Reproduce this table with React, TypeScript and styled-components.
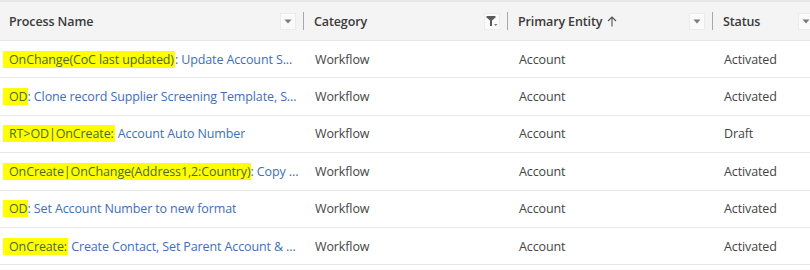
import React from "react";
import styled, { createGlobalStyle } from "styled-components";

const GlobalStyle = createGlobalStyle`
  html, body { margin: 0; padding: 0; background: #ffffff; }
  body { font-family: "Open Sans", "Noto Sans", sans-serif; }
`;

const Grid = styled.div`
  width: 810px;
  display: grid;
  grid-template-columns: 305px 204px 205px 96px;
  font-size: 12.5px;
  letter-spacing: -0.12px;
  color: #3b3a39;
`;

const HeaderCell = styled.div<{ $last?: boolean }>`
  height: 41px;
  background: #f4f4f4;
  border-top: 2px solid #e6e6e6;
  border-bottom: 1px solid #e6e6e6;
  display: flex;
  align-items: center;
  padding-left: 9px;
  padding-right: 0;
  gap: 7px;
  font-weight: 600;
  color: #3b3a39;
  box-sizing: border-box;
  overflow: hidden;
`;

const HeaderLabel = styled.span`
  flex: 1;
  white-space: nowrap;
  display: flex;
  align-items: center;
  gap: 5px;
`;

const IconBox = styled.span<{ $edge?: boolean }>`
  width: 16px;
  height: 17px;
  background: #fafafa;
  border: 1px solid #ececec;
  box-sizing: border-box;
  display: flex;
  align-items: center;
  justify-content: center;
  flex: none;
  margin-right: ${(p) => (p.$edge ? "-4px" : "0")};
`;

const Separator = styled.span`
  width: 1px;
  height: 18px;
  background: #a8a8a8;
  flex: none;
  margin-right: 1px;
`;

const Cell = styled.div`
  height: 37.4px;
  border-bottom: 1px solid #e8e8e8;
  box-sizing: border-box;
  display: flex;
  align-items: center;
  padding-left: 10px;
  padding-right: 6px;
  white-space: nowrap;
  overflow: hidden;
  color: #444444;
`;

const NameCell = styled(Cell)`
  padding-left: 3px;
`;

const NameText = styled.span`
  overflow: hidden;
  text-overflow: ellipsis;
  white-space: nowrap;
  color: #3d6fb8;
`;

const Mark = styled.span<{ $py: number; $px: number }>`
  background: #ffff00;
  color: #4b6a2a;
  padding: ${(p) => `${p.$py}px ${p.$px}px ${p.$py}px 6px`};
`;

const Caret = () => (
  <svg width="8" height="5" viewBox="0 0 8 5">
    <path d="M0.5 0.5 L7.5 0.5 L4 4.5 Z" fill="#7a7a7a" />
  </svg>
);

const FilterIcon = () => (
  <svg width="12" height="12" viewBox="0 0 12 12">
    <path d="M0.5 1 L9.5 1 L9.5 2.5 L6 5.5 L6 11 L4 11 L4 5.5 L0.5 2.5 Z" fill="#5a5a5a" />
    <path d="M8 9 L11.5 9 L9.75 11 Z" fill="#7a7a7a" />
  </svg>
);

const SortUp = () => (
  <svg width="10" height="11" viewBox="0 0 10 11">
    <path d="M5 10.5 L5 1 M1 5 L5 1 L9 5" stroke="#555" strokeWidth="1.1" fill="none" />
  </svg>
);

type Row = { mark: string; rest: string; py: number; px: number; status: string };

const rows: Row[] = [
  { mark: "OnChange(CoC last updated)", rest: ": Update Account S...", py: 6, px: 1, status: "Activated" },
  { mark: "OD", rest: ": Clone record Supplier Screening Template, S...", py: 3, px: 0, status: "Activated" },
  { mark: "RT>OD|OnCreate:", rest: " Account Auto Number", py: 4, px: 1, status: "Draft" },
  { mark: "OnCreate|OnChange(Address1,2:Country)", rest: ": Copy ...", py: 4, px: 0, status: "Activated" },
  { mark: "OD", rest: ": Set Account Number to new format", py: 3, px: 0, status: "Activated" },
  { mark: "OnCreate:", rest: " Create Contact, Set Parent Account & ...", py: 3, px: 1, status: "Activated" },
];

export default function App() {
  return (
    <>
      <GlobalStyle />
      <Grid>
        <HeaderCell>
          <HeaderLabel>Process Name</HeaderLabel>
          <IconBox><Caret /></IconBox>
          <Separator />
        </HeaderCell>
        <HeaderCell>
          <HeaderLabel>Category</HeaderLabel>
          <IconBox><FilterIcon /></IconBox>
          <Separator />
        </HeaderCell>
        <HeaderCell>
          <HeaderLabel>Primary Entity <SortUp /></HeaderLabel>
          <IconBox><Caret /></IconBox>
          <Separator />
        </HeaderCell>
        <HeaderCell $last>
          <HeaderLabel>Status</HeaderLabel>
          <IconBox $edge><Caret /></IconBox>
        </HeaderCell>
        {rows.map((r, i) => (
          <React.Fragment key={i}>
            <NameCell>
              <NameText>
                <Mark $py={r.py} $px={r.px}>{r.mark}</Mark>
                {r.rest}
              </NameText>
            </NameCell>
            <Cell>Workflow</Cell>
            <Cell>Account</Cell>
            <Cell>{r.status}</Cell>
          </React.Fragment>
        ))}
      </Grid>
    </>
  );
}
